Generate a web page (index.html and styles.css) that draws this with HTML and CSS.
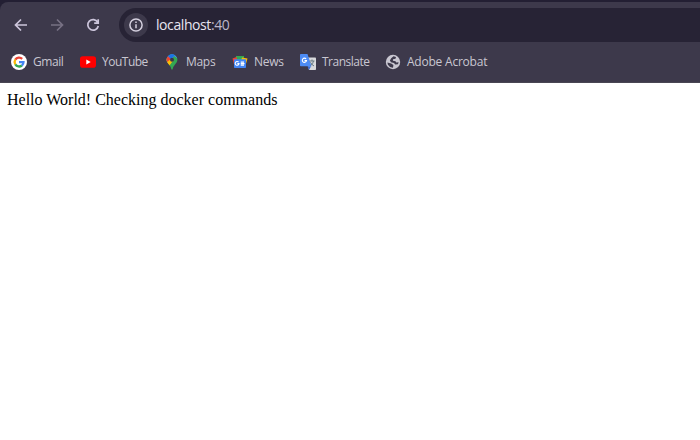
FILE: index.html
```html
<!DOCTYPE html>
<html lang="en">
<head>
<meta charset="utf-8">
<title>localhost:40</title>
<link rel="stylesheet" href="styles.css">
</head>
<body>
<header class="chrome">
  <div class="toolbar">
    <svg class="nav" viewBox="0 0 16 16"><path d="M14 8H3M8 2.500 2.500 8 8 13.500"/></svg>
    <svg class="nav disabled" viewBox="0 0 16 16"><path d="M2 8h11M8 2.500 13.500 8 8 13.500"/></svg>
    <svg class="nav" viewBox="0 0 16 16"><path d="M12.700 5.200A5.300 5.300 0 1 0 13.300 9M13.200 2.200V6.200H9.200"/></svg>
    <div class="address">
      <span class="info"><svg viewBox="0 0 16 16"><circle cx="8" cy="8" r="6.100"/><path d="M8 7.300v4M8 4.500v1.600"/></svg></span>
      <span class="url">localhost<span class="port">:40</span></span>
    </div>
  </div>
  <nav class="bookmarks">
    <a class="bookmark gmail"><svg viewBox="0 0 16 16"><circle cx="8" cy="8" r="8" fill="#fff"/><g fill="none" stroke-width="2.300"><path d="M4.300 5.700A4.500 4.500 0 0 1 11.200 4.800" stroke="#ea4335"/><path d="M4.300 5.700A4.500 4.500 0 0 0 4.300 10.400" stroke="#fbbc05"/><path d="M4.300 10.400A4.500 4.500 0 0 0 10.900 11.500" stroke="#34a853"/><path d="M8 8.100H12.500A4.500 4.500 0 0 1 10.900 11.500" stroke="#4285f4"/></g></svg><span>Gmail</span></a>
    <a class="bookmark youtube"><svg viewBox="0 0 16 16"><rect y="2.300" width="16" height="11.400" rx="2.800" fill="#f00"/><path d="M6.300 5.500 10.700 8 6.300 10.500Z" fill="#fff"/></svg><span>YouTube</span></a>
    <a class="bookmark maps"><svg viewBox="0 0 16 16"><clipPath id="pin"><path d="M8 .3a5.400 5.400 0 0 0-5.400 5.400c0 3.700 4.300 5.500 4.700 9.200q.7 1.500 1.400 0c.4-3.700 4.700-5.500 4.700-9.200A5.400 5.400 0 0 0 8 .3Z"/></clipPath><g clip-path="url(#pin)"><path d="M0 0h16v16H0Z" fill="#34a853"/><path d="M0 13 10 2 14 5V0H0Z" fill="#4285f4"/><path d="M0 2 8 6 3 12H0Z" fill="#fbbc04"/><path d="M0 0 4 2 7 5 3 8H0Z" fill="#ea4335"/><path d="M4 2 7 5 12 0H4Z" fill="#1a73e8"/><path d="M3 10 7.500 5.500 9 7 5 12Z" fill="#fbbc04"/></g><circle cx="8" cy="5.700" r="2" fill="#38364a"/></svg><span>Maps</span></a>
    <a class="bookmark news"><svg viewBox="0 0 16 16"><path d="M4 2h8v5H4Z" fill="#34a853"/><path d="m.5 4.500 4-1.500 2 7-4 2Z" fill="#ea4335"/><path d="m10 3.500 5.500 1-2 7-5-3Z" fill="#fbbc04"/><rect x="2" y="5.200" width="12" height="8.800" rx=".8" fill="#4285f4"/><g fill="none" stroke="#fff" stroke-width="1.100"><path d="M6.600 8.200A1.900 1.900 0 1 0 7 9.600H5.300"/><path d="M8.700 8.100H12M8.700 9.600H12.500M8.700 11.100H12"/></g></svg><span>News</span></a>
    <a class="bookmark translate"><svg viewBox="0 0 16 16"><path d="M6 3.500h9.200q.8 0 .8.800v10.900q0 .8-.8.800H9Z" fill="#d8d9dc"/><path d="M7.500 12.300H11L9 16Z" fill="#3367d6"/><path d="M.8 0H7.500L11.500 12.300H.8Q0 12.300 0 11.500V.8Q0 0 .8 0Z" fill="#4c8bf5"/><path d="M6.100 5A2.100 2.100 0 1 0 6.500 6.600H4.500" fill="none" stroke="#fff" stroke-width="1.100"/><path d="M9.500 7h5M12 5.500V7M13.500 7Q13 10 10.700 11.500M10.500 8.300Q11.500 10.500 14 12" fill="none" stroke="#687b83" stroke-width="1"/></svg><span>Translate</span></a>
    <a class="bookmark acrobat"><svg viewBox="0 0 16 16"><circle cx="8" cy="8" r="7.200" fill="#c9c7d1"/><path d="M8.500 2.300 11 3 10.500 4.700 8 5.300 7.900 6.700 10.500 7.200 11.300 8.500 13.600 8.300 13 10.300 10.200 10.500 9 8.900 6 8.300 4.900 6.600 6.200 4.200ZM2.400 8.600 6.200 9.400 8.400 11 8 13.700 5 12.900 2.900 10.800Z" fill="#3d394b"/></svg><span>Adobe Acrobat</span></a>
  </nav>
</header>
<main class="page">Hello World! Checking docker commands</main>
</body>
</html>
```
FILE: styles.css
```css
body {
  margin: 0;
  background: #fff;
}

.chrome {
  box-sizing: border-box;
  height: 83px;
  padding-top: 2px;
  background: #231f33;
  font-family: "Open Sans", sans-serif;
}

.toolbar {
  display: flex;
  align-items: center;
  height: 46px;
  padding-left: 13px;
  background: #3d394b;
  border-top-left-radius: 8px;
}

.nav {
  width: 16px;
  height: 16px;
  margin-right: 20px;
  fill: none;
  stroke: #cdc6dc;
  stroke-width: 1.7;
}

.nav.disabled {
  stroke: #777184;
}

.nav:nth-child(3) {
  margin-right: 18px;
}

.address {
  display: flex;
  flex: 1;
  align-items: center;
  box-sizing: border-box;
  height: 34px;
  padding-left: 5px;
  background: #272335;
  border-radius: 17px 0 0 17px;
}

.info {
  display: flex;
  align-items: center;
  justify-content: center;
  width: 24px;
  height: 24px;
  margin-right: 8px;
  background: #3d394b;
  border-radius: 50%;
}

.info svg {
  width: 16px;
  height: 16px;
  fill: none;
  stroke: #d5d0df;
  stroke-width: 1.5;
}

.url {
  padding-bottom: 1px;
  color: #e8e5f0;
  font-size: 14px;
  letter-spacing: -0.42px;
}

.port {
  color: #bcb6c8;
}

.bookmarks {
  display: flex;
  box-sizing: border-box;
  height: 35px;
  padding-left: 11px;
  background: #3d394b;
  border-bottom: 1px solid #494653;
}

.bookmark {
  display: flex;
  align-items: center;
  gap: 6px;
  height: 28px;
  color: #c9c7d1;
  font-size: 12px;
  white-space: nowrap;
}

.bookmark svg {
  flex: none;
  width: 16px;
  height: 16px;
}

.bookmark span {
  padding-bottom: 1px;
}

.gmail {
  width: 69px;
  letter-spacing: -0.45px;
}

.youtube {
  width: 84px;
  letter-spacing: -0.5px;
}

.maps {
  width: 68px;
  letter-spacing: -0.3px;
}

.news {
  width: 68px;
  letter-spacing: -0.3px;
}

.translate {
  width: 85px;
  letter-spacing: -0.5px;
}

.acrobat {
  letter-spacing: -0.22px;
}

.page {
  padding: 8px 7px;
  color: #000;
  font: 16px/18px "Liberation Serif", serif;
}
```
